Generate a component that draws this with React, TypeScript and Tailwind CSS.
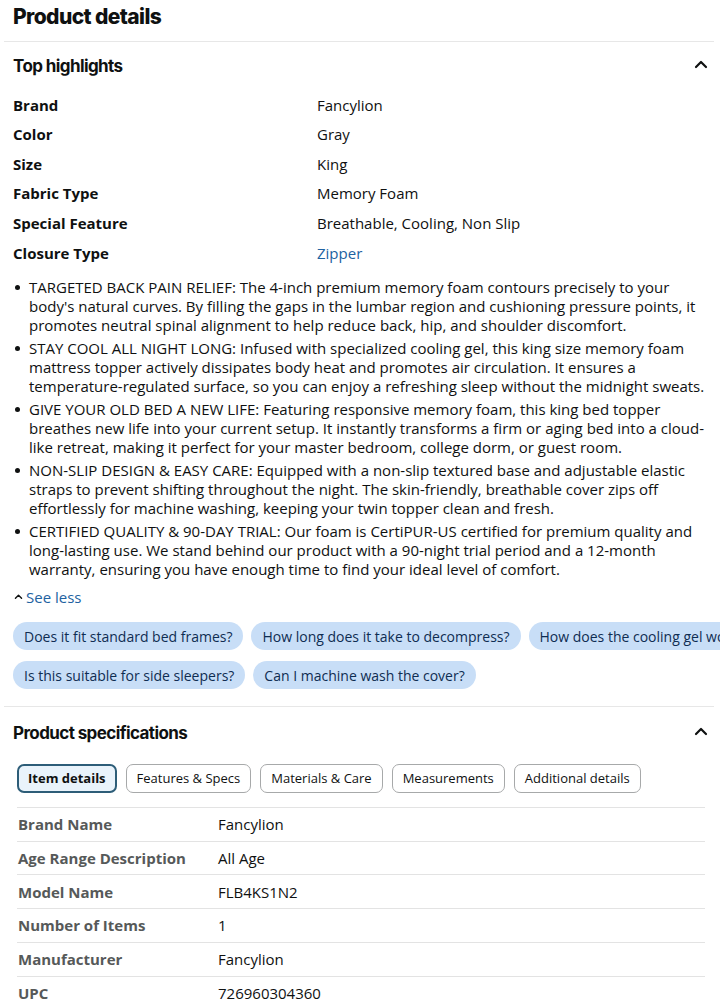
import React from "react";

const highlights: [string, string, boolean?][] = [
  ["Brand", "Fancylion"],
  ["Color", "Gray"],
  ["Size", "King"],
  ["Fabric Type", "Memory Foam"],
  ["Special Feature", "Breathable, Cooling, Non Slip"],
  ["Closure Type", "Zipper", true],
];

// Each bullet is kept as its printed lines so the wrapping stays fixed.
const bullets: string[][] = [
  [
    "TARGETED BACK PAIN RELIEF: The 4-inch premium memory foam contours precisely to your",
    "body's natural curves. By filling the gaps in the lumbar region and cushioning pressure points, it",
    "promotes neutral spinal alignment to help reduce back, hip, and shoulder discomfort.",
  ],
  [
    "STAY COOL ALL NIGHT LONG: Infused with specialized cooling gel, this king size memory foam",
    "mattress topper actively dissipates body heat and promotes air circulation. It ensures a",
    "temperature-regulated surface, so you can enjoy a refreshing sleep without the midnight sweats.",
  ],
  [
    "GIVE YOUR OLD BED A NEW LIFE: Featuring responsive memory foam, this king bed topper",
    "breathes new life into your current setup. It instantly transforms a firm or aging bed into a cloud-",
    "like retreat, making it perfect for your master bedroom, college dorm, or guest room.",
  ],
  [
    "NON-SLIP DESIGN & EASY CARE: Equipped with a non-slip textured base and adjustable elastic",
    "straps to prevent shifting throughout the night. The skin-friendly, breathable cover zips off",
    "effortlessly for machine washing, keeping your twin topper clean and fresh.",
  ],
  [
    "CERTIFIED QUALITY & 90-DAY TRIAL: Our foam is CertiPUR-US certified for premium quality and",
    "long-lasting use. We stand behind our product with a 90-night trial period and a 12-month",
    "warranty, ensuring you have enough time to find your ideal level of comfort.",
  ],
];

const chipsRow1 = [
  "Does it fit standard bed frames?",
  "How long does it take to decompress?",
  "How does the cooling gel work?",
];
const chipsRow2 = ["Is this suitable for side sleepers?", "Can I machine wash the cover?"];

const tabs = ["Item details", "Features & Specs", "Materials & Care", "Measurements", "Additional details"];

const specs: [string, string][] = [
  ["Brand Name", "Fancylion"],
  ["Age Range Description", "All Age"],
  ["Model Name", "FLB4KS1N2"],
  ["Number of Items", "1"],
  ["Manufacturer", "Fancylion"],
  ["UPC", "726960304360"],
];

function ChevronUp({ className }: { className?: string }) {
  return (
    <svg viewBox="0 0 14 10" className={className} fill="none">
      <path d="M2 8 L7 3 L12 8" stroke="#0f1111" strokeWidth="2.2" strokeLinecap="round" strokeLinejoin="round" />
    </svg>
  );
}

export default function App() {
  return (
    <div className="w-[720px] h-[1007px] overflow-hidden bg-white text-[#0f1111] font-['Open_Sans','Noto_Sans',sans-serif]">
      <div className="px-[13px] pt-[3px] h-[41px]">
        <h1 className="font-['Inter',sans-serif] font-extrabold text-[21px] leading-[28px] tracking-[-0.6px]">Product details</h1>
      </div>
      <div className="mx-[4px] mr-[6px] border-t border-[#e7e7e7]" />

      {/* Top highlights */}
      <div className="px-[13px]">
        <div className="flex items-center justify-between h-[48px] pt-[1px]">
          <h2 className="font-['Inter',sans-serif] font-bold text-[17px] tracking-[-0.6px]">Top highlights</h2>
          <ChevronUp className="w-[14px] h-[10px] -mr-[1px] -mt-[6px]" />
        </div>
        <div className="flex flex-col">
          {highlights.map(([k, v, link]) => (
            <div key={k} className="flex h-[29.6px] items-center text-[15px]">
              <div className="w-[304px] font-bold">{k}</div>
              <div className={link ? "text-[#2162a1]" : ""}>{v}</div>
            </div>
          ))}
        </div>

        <ul className="mt-[10px] flex flex-col gap-[4px] text-[15px] leading-[19px]">
          {bullets.map((lines) => (
            <li key={lines[0]} className="flex">
              <span className="w-[16px] shrink-0 pt-[7px] pl-[2px]">
                <span className="block w-[5px] h-[5px] rounded-full bg-[#0f1111]" />
              </span>
              <span className="flex flex-col whitespace-nowrap">
                {lines.map((l) => (
                  <span key={l}>{l}</span>
                ))}
              </span>
            </li>
          ))}
        </ul>

        <div className="mt-[7px] flex items-center gap-[3px] text-[15px] text-[#2162a1]">
          <svg viewBox="0 0 10 8" className="w-[9px] h-[7px] ml-[1px]" fill="none">
            <path d="M1.5 6 L5 2.5 L8.5 6" stroke="#0f1111" strokeWidth="1.6" strokeLinecap="round" strokeLinejoin="round" />
          </svg>
          <span>See less</span>
        </div>

        <div className="mt-[14px] flex flex-col gap-[11px] text-[14px] text-[#0f2d52]">
          <div className="flex gap-[8px] whitespace-nowrap">
            {chipsRow1.map((c) => (
              <span key={c} className="h-[28px] shrink-0 flex items-center px-[11px] rounded-full bg-[#c8def7]">{c}</span>
            ))}
          </div>
          <div className="flex gap-[8px] whitespace-nowrap">
            {chipsRow2.map((c) => (
              <span key={c} className="h-[28px] shrink-0 flex items-center px-[11px] rounded-full bg-[#c8def7]">{c}</span>
            ))}
          </div>
        </div>
      </div>

      <div className="mt-[17px] mx-[4px] mr-[6px] border-t border-[#e7e7e7]" />

      {/* Product specifications */}
      <div className="px-[13px]">
        <div className="flex items-center justify-between h-[52px] pt-[1px]">
          <h2 className="font-['Inter',sans-serif] font-bold text-[17px] tracking-[-0.6px]">Product specifications</h2>
          <ChevronUp className="w-[14px] h-[10px] -mr-[1px] -mt-[6px]" />
        </div>
        <div className="mt-[5px] pl-[4px] flex gap-[9px] text-[13px] whitespace-nowrap">
          {tabs.map((t, i) => (
            <span
              key={t}
              className={
                i === 0
                  ? "h-[29px] flex items-center px-[9px] rounded-[7px] border-2 border-[#2d5d78] bg-[#e9f3fb] font-bold"
                  : "h-[29px] flex items-center px-[10px] rounded-[7px] border border-[#a7a9aa]"
              }
            >
              {t}
            </span>
          ))}
        </div>
        <div className="mt-[14px] ml-[4px] mr-[2px] border-t border-[#e3e3e3]">
          {specs.map(([k, v]) => (
            <div key={k} className="flex items-center h-[33.7px] border-b border-[#e3e3e3] text-[15px]">
              <div className="w-[201px] pl-[1px] font-bold text-[#565959]">{k}</div>
              <div>{v}</div>
            </div>
          ))}
        </div>
      </div>
    </div>
  );
}
